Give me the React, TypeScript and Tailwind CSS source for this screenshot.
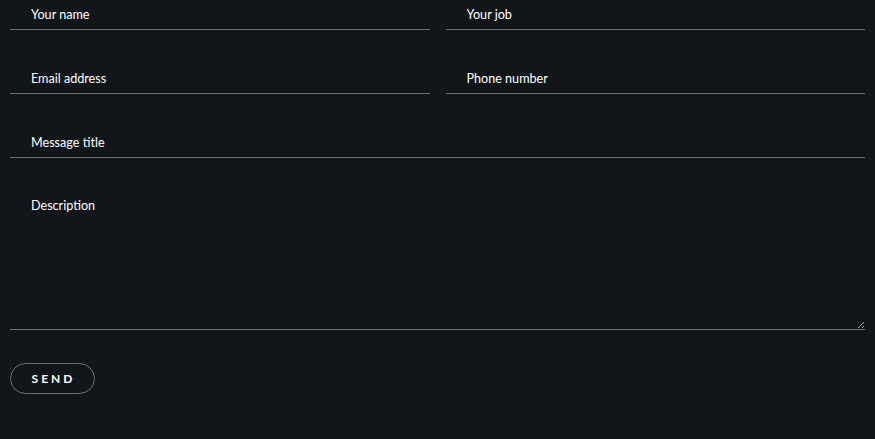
export default function App() {
  const field =
    "h-[30px] w-full bg-transparent border-0 border-b border-[#6d7175] pl-[21px] pr-3 pb-[1px] text-[12.6px] text-white placeholder:text-white outline-none";

  return (
    <div
      className="min-h-[439px] w-full bg-[#12161b] px-[10px]"
      style={{ fontFamily: 'Lato, "Noto Sans", sans-serif' }}
    >
      <form className="flex flex-col" onSubmit={(e) => e.preventDefault()}>
        <div className="grid grid-cols-2 gap-x-4 gap-y-[34px]">
          <input className={field} placeholder="Your name" />
          <input className={field} placeholder="Your job" />
          <input className={field} placeholder="Email address" />
          <input className={field} placeholder="Phone number" />
          <input className={`${field} col-span-2`} placeholder="Message title" />
          <textarea
            className="col-span-2 h-[138px] w-full bg-transparent border-0 border-b border-[#6d7175] pl-[21px] pr-3 pt-[5px] text-[12.6px] text-white placeholder:text-white outline-none"
            placeholder="Description"
          />
        </div>
        <div className="mt-[33px]">
          <button
            type="submit"
            className="h-[31px] w-[85px] rounded-full border border-[#6d7175] text-[12px] font-bold tracking-[0.25em] text-white pl-[2px]"
          >
            SEND
          </button>
        </div>
      </form>
    </div>
  );
}
